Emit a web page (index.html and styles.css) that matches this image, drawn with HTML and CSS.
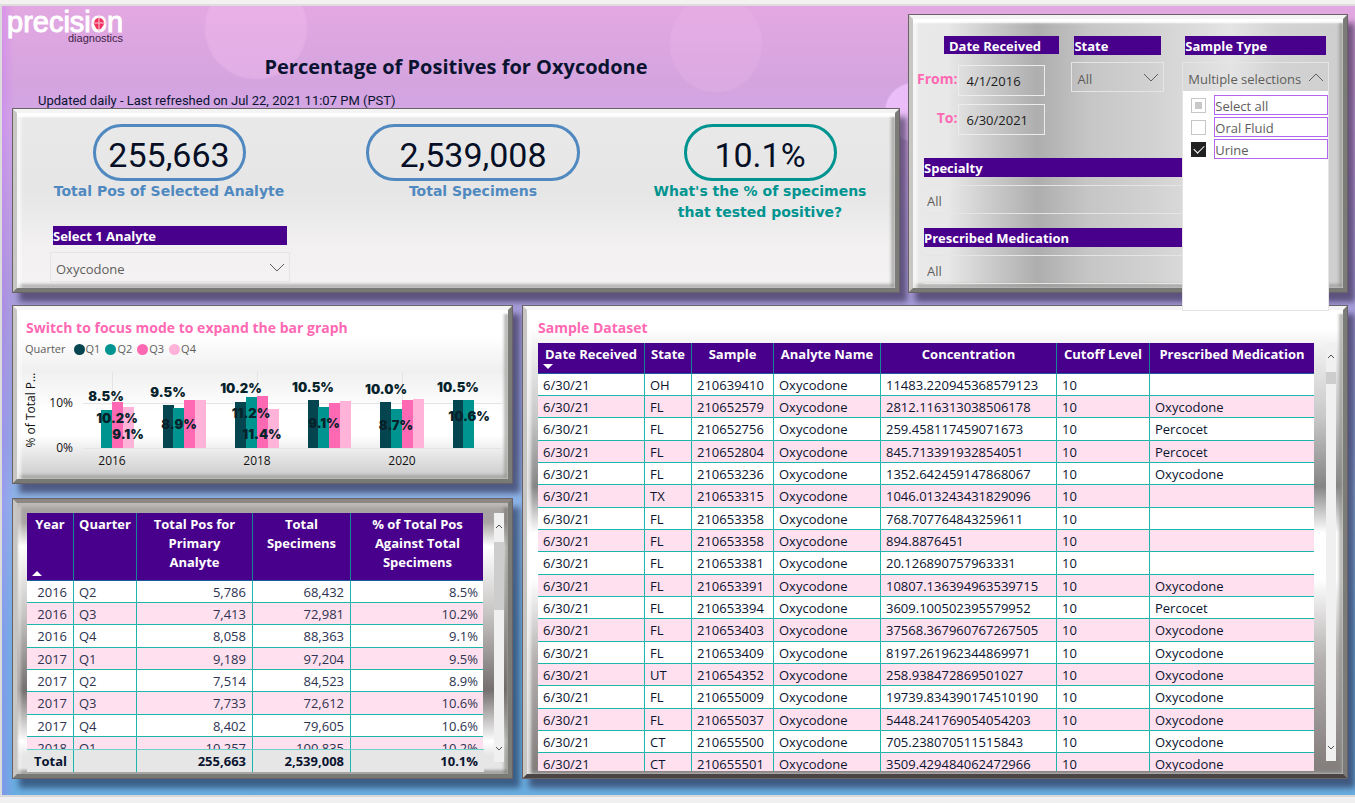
FILE: index.html
```html
<!DOCTYPE html>
<html lang="en">
<head>
<meta charset="utf-8">
<title>Percentage of Positives for Oxycodone</title>
<link rel="stylesheet" href="styles.css">
</head>
<body>
<main class="report">
  <div class="row row-top">
    <div class="intro">
      <header class="masthead">
        <svg class="logo" viewBox="0 0 124 40" role="img" aria-label="precision diagnostics">
          <circle cx="95" cy="17" r="7" fill="#f0305f"/>
          <text class="logo-name" x="3" y="26">precision</text>
          <circle cx="95" cy="17" r="5" fill="#f0305f"/>
          <path d="M95 9v17M87 17h16" stroke="#fbc8d8" stroke-width="1"/>
          <text class="logo-sub" x="64" y="36">diagnostics</text>
        </svg>
        <h1 class="title">Percentage of Positives for Oxycodone</h1>
        <p class="updated">Updated daily - Last refreshed on Jul 22, 2021 11:07 PM (PST)</p>
      </header>
      <section class="panel panel-kpi">
        <div class="kpis">
          <div class="kpi"><div class="pill">255,663</div><p class="kpi-label">Total Pos of Selected Analyte</p></div>
          <div class="kpi"><div class="pill pill-wide">2,539,008</div><p class="kpi-label">Total Specimens</p></div>
          <div class="kpi kpi-teal"><div class="pill">10.1%</div><p class="kpi-label">What's the % of specimens<br>that tested positive?</p></div>
        </div>
        <div class="slicer slicer-analyte">
          <label class="bar" for="analyte">Select 1 Analyte</label>
          <div class="drop">
            <select id="analyte"><option>Oxycodone</option></select>
            <svg class="chevron" viewBox="0 0 16 9"><path d="M1 1l7 7 7-7"/></svg>
          </div>
        </div>
      </section>
    </div>

    <section class="panel panel-filters">
      <div class="filters-top">
        <div class="dates">
          <div class="bar bar-date">Date Received</div>
          <div class="date-row"><label for="from">From:</label><input id="from" type="text" value="4/1/2016"></div>
          <div class="date-row"><label for="to">To:</label><input id="to" type="text" value="6/30/2021"></div>
        </div>
        <div class="slicer">
          <label class="bar" for="state">State</label>
          <div class="drop">
            <select id="state"><option>All</option></select>
            <svg class="chevron" viewBox="0 0 16 9"><path d="M1 1l7 7 7-7"/></svg>
          </div>
        </div>
        <div class="slicer slicer-sample">
          <div class="bar">Sample Type</div>
          <div class="drop">
            <button class="drop-button" type="button" aria-expanded="true">Multiple selections</button>
            <svg class="chevron" viewBox="0 0 16 9"><path d="M1 8l7-7 7 7"/></svg>
            <div class="menu">
              <div class="option"><input class="partial" type="checkbox" id="opt-all"><label for="opt-all">Select all</label></div>
              <div class="option"><input type="checkbox" id="opt-oral"><label for="opt-oral">Oral Fluid</label></div>
              <div class="option"><input type="checkbox" id="opt-urine" checked><label for="opt-urine">Urine</label></div>
            </div>
          </div>
        </div>
      </div>
      <div class="slicer slicer-wide">
        <label class="bar" for="specialty">Specialty</label>
        <div class="drop"><select id="specialty"><option>All</option></select></div>
      </div>
      <div class="slicer slicer-wide">
        <label class="bar" for="medication">Prescribed Medication</label>
        <div class="drop"><select id="medication"><option>All</option></select></div>
      </div>
    </section>
  </div>

  <div class="row row-bottom">
    <div class="stack">
      <section class="panel panel-chart">
        <h2 class="heading">Switch to focus mode to expand the bar graph</h2>
        <ul class="legend">
          <li class="legend-title">Quarter</li>
          <li class="q1">Q1</li><li class="q2">Q2</li><li class="q3">Q3</li><li class="q4">Q4</li>
        </ul>
        <svg class="chart" viewBox="21 360 483 115" role="img" aria-label="Percent of total positives by quarter">
          <path class="grid" d="M83 403.5H503M83 448.5H503M112.500 372V448M257.500 372V448M402.500 372V448"/>
          <g class="fill-q1">
            <rect x="163" y="405" width="11" height="43"/><rect x="235" y="402" width="11" height="46"/><rect x="308" y="400" width="11" height="48"/><rect x="380" y="402" width="11" height="46"/><rect x="453" y="400" width="11" height="48"/>
          </g>
          <g class="fill-q2">
            <rect x="101" y="410" width="11" height="38"/><rect x="173" y="408" width="11" height="40"/><rect x="246" y="397" width="11" height="51"/><rect x="318" y="407" width="11" height="41"/><rect x="391" y="409" width="11" height="39"/><rect x="463" y="400" width="11" height="48"/>
          </g>
          <g class="fill-q3">
            <rect x="112" y="402" width="11" height="46"/><rect x="184" y="400" width="11" height="48"/><rect x="257" y="396" width="11" height="52"/><rect x="329" y="403" width="11" height="45"/><rect x="402" y="400" width="11" height="48"/>
          </g>
          <g class="fill-q4">
            <rect x="123" y="407" width="11" height="41"/><rect x="195" y="400" width="11" height="48"/><rect x="268" y="409" width="11" height="39"/><rect x="340" y="401" width="11" height="47"/><rect x="413" y="399" width="11" height="49"/>
          </g>
          <g class="values">
            <text x="106" y="401">8.5%</text><text x="117" y="423">10.2%</text><text x="128" y="439">9.1%</text>
            <text x="168" y="397">9.5%</text><text x="179" y="429">8.9%</text>
            <text x="241" y="393">10.2%</text><text x="251" y="418">11.2%</text><text x="262" y="439">11.4%</text>
            <text x="313" y="392">10.5%</text><text x="324" y="428">9.1%</text>
            <text x="386" y="394">10.0%</text><text x="396" y="430">8.7%</text>
            <text x="458" y="392">10.5%</text><text x="469" y="421">10.6%</text>
          </g>
          <g class="axis">
            <text x="112" y="465">2016</text><text x="257" y="465">2018</text><text x="402" y="465">2020</text>
            <text class="end" x="73" y="407">10%</text><text class="end" x="73" y="452">0%</text>
            <text transform="translate(35 410) rotate(-90)">% of Total P...</text>
          </g>
        </svg>
      </section>

      <section class="panel panel-quarters">
        <div class="table-area">
          <div class="clip">
            <table class="data quarters">
              <colgroup><col class="w-year"><col class="w-quarter"><col class="w-pos"><col class="w-spec"><col class="w-pct"></colgroup>
              <thead><tr><th>Year<svg class="sort" viewBox="0 0 10 5"><path d="M0 5l5-5 5 5z"/></svg></th><th>Quarter</th><th>Total Pos for<br>Primary<br>Analyte</th><th>Total<br>Specimens</th><th>% of Total Pos<br>Against Total<br>Specimens</th></tr></thead>
              <tbody>
                <tr><td>2016</td><td>Q2</td><td>5,786</td><td>68,432</td><td>8.5%</td></tr>
                <tr><td>2016</td><td>Q3</td><td>7,413</td><td>72,981</td><td>10.2%</td></tr>
                <tr><td>2016</td><td>Q4</td><td>8,058</td><td>88,363</td><td>9.1%</td></tr>
                <tr><td>2017</td><td>Q1</td><td>9,189</td><td>97,204</td><td>9.5%</td></tr>
                <tr><td>2017</td><td>Q2</td><td>7,514</td><td>84,523</td><td>8.9%</td></tr>
                <tr><td>2017</td><td>Q3</td><td>7,733</td><td>72,612</td><td>10.6%</td></tr>
                <tr><td>2017</td><td>Q4</td><td>8,402</td><td>79,605</td><td>10.6%</td></tr>
                <tr><td>2018</td><td>Q1</td><td>10,257</td><td>100,835</td><td>10.2%</td></tr>
              </tbody>
            </table>
          </div>
          <table class="data quarters total">
            <colgroup><col class="w-year"><col class="w-quarter"><col class="w-pos"><col class="w-spec"><col class="w-pct"></colgroup>
            <tbody><tr><td>Total</td><td></td><td>255,663</td><td>2,539,008</td><td>10.1%</td></tr></tbody>
          </table>
        </div>
        <div class="scroll">
          <svg viewBox="0 0 8 5"><path d="M1 4l3-3 3 3"/></svg>
          <div class="thumb"></div>
          <svg class="down" viewBox="0 0 8 5"><path d="M1 1l3 3 3-3"/></svg>
        </div>
      </section>
    </div>

    <section class="panel panel-dataset">
      <h2 class="heading">Sample Dataset</h2>
      <div class="dataset-body">
        <div class="clip">
          <table class="data dataset">
            <colgroup><col class="w-date"><col class="w-state"><col class="w-sample"><col class="w-analyte"><col class="w-conc"><col class="w-cutoff"><col class="w-med"></colgroup>
            <thead><tr><th>Date Received<svg class="sort" viewBox="0 0 10 5"><path d="M0 0h10l-5 5z"/></svg></th><th>State</th><th>Sample</th><th>Analyte Name</th><th>Concentration</th><th>Cutoff Level</th><th>Prescribed Medication</th></tr></thead>
            <tbody>
              <tr><td>6/30/21</td><td>OH</td><td>210639410</td><td>Oxycodone</td><td>11483.220945368579123</td><td>10</td><td></td></tr>
              <tr><td>6/30/21</td><td>FL</td><td>210652579</td><td>Oxycodone</td><td>2812.116313038506178</td><td>10</td><td>Oxycodone</td></tr>
              <tr><td>6/30/21</td><td>FL</td><td>210652756</td><td>Oxycodone</td><td>259.458117459071673</td><td>10</td><td>Percocet</td></tr>
              <tr><td>6/30/21</td><td>FL</td><td>210652804</td><td>Oxycodone</td><td>845.713391932854051</td><td>10</td><td>Percocet</td></tr>
              <tr><td>6/30/21</td><td>FL</td><td>210653236</td><td>Oxycodone</td><td>1352.642459147868067</td><td>10</td><td>Oxycodone</td></tr>
              <tr><td>6/30/21</td><td>TX</td><td>210653315</td><td>Oxycodone</td><td>1046.013243431829096</td><td>10</td><td></td></tr>
              <tr><td>6/30/21</td><td>FL</td><td>210653358</td><td>Oxycodone</td><td>768.707764843259611</td><td>10</td><td></td></tr>
              <tr><td>6/30/21</td><td>FL</td><td>210653358</td><td>Oxycodone</td><td>894.8876451</td><td>10</td><td></td></tr>
              <tr><td>6/30/21</td><td>FL</td><td>210653381</td><td>Oxycodone</td><td>20.126890757963331</td><td>10</td><td></td></tr>
              <tr><td>6/30/21</td><td>FL</td><td>210653391</td><td>Oxycodone</td><td>10807.136394963539715</td><td>10</td><td>Oxycodone</td></tr>
              <tr><td>6/30/21</td><td>FL</td><td>210653394</td><td>Oxycodone</td><td>3609.100502395579952</td><td>10</td><td>Percocet</td></tr>
              <tr><td>6/30/21</td><td>FL</td><td>210653403</td><td>Oxycodone</td><td>37568.367960767267505</td><td>10</td><td>Oxycodone</td></tr>
              <tr><td>6/30/21</td><td>FL</td><td>210653409</td><td>Oxycodone</td><td>8197.261962344869971</td><td>10</td><td>Oxycodone</td></tr>
              <tr><td>6/30/21</td><td>UT</td><td>210654352</td><td>Oxycodone</td><td>258.938472869501027</td><td>10</td><td>Oxycodone</td></tr>
              <tr><td>6/30/21</td><td>FL</td><td>210655009</td><td>Oxycodone</td><td>19739.834390174510190</td><td>10</td><td>Oxycodone</td></tr>
              <tr><td>6/30/21</td><td>FL</td><td>210655037</td><td>Oxycodone</td><td>5448.241769054054203</td><td>10</td><td>Oxycodone</td></tr>
              <tr><td>6/30/21</td><td>CT</td><td>210655500</td><td>Oxycodone</td><td>705.238070511515843</td><td>10</td><td>Oxycodone</td></tr>
              <tr><td>6/30/21</td><td>CT</td><td>210655501</td><td>Oxycodone</td><td>3509.429484062472966</td><td>10</td><td>Oxycodone</td></tr>
            </tbody>
          </table>
        </div>
        <div class="scroll">
          <svg viewBox="0 0 8 5"><path d="M1 4l3-3 3 3"/></svg>
          <div class="thumb"></div>
          <svg class="down" viewBox="0 0 8 5"><path d="M1 1l3 3 3-3"/></svg>
        </div>
      </div>
    </section>
  </div>
</main>
</body>
</html>
```

FILE: styles.css
```css
* { box-sizing: border-box; }

body {
  margin: 0;
  height: 100vh;
  display: flex;
  flex-direction: column;
  overflow: hidden;
  background: #f3f2f1;
  border-top: 4px solid #f3f2f1;
  border-bottom: 6px solid #f0f0f0;
  font-family: "Segoe UI", "Open Sans", "Noto Sans", sans-serif;
  font-size: 13px;
  color: #0a1430;
}

h1, h2, p, ul { margin: 0; padding: 0; }

.report {
  flex: 1;
  min-height: 0;
  display: flex;
  flex-direction: column;
  gap: 12px;
  padding: 0 7px 16px 10px;
  border-top: 2px solid #dedcdc;
  border-bottom: 2px solid #d9d9d9;
  border-left: 2px solid #dcdcdc;
  background:
    linear-gradient(to right, rgba(190, 90, 255, .25), transparent 12px),
    radial-gradient(circle at 254px 22px, rgba(244, 192, 240, .35) 50px, transparent 52px),
    radial-gradient(ellipse at 714px 38px, rgba(240, 186, 236, .25) 45px, transparent 47px),
    radial-gradient(circle at 912px 106px, rgba(240, 195, 255, .8) 28px, transparent 30px),
    linear-gradient(#e3a8e2 0, #d4a4df 80px, #d2a6e6 110px, #a99fdc 292px, #8fa8e2 440px, #8cb4e8 495px, #6fb1e3 640px, #6aaee2 100%);
}

.row { display: grid; }
.row-top { grid-template-columns: minmax(0, 888fr) minmax(0, 440fr); gap: 8px; }
.row-bottom {
  flex: 1;
  min-height: 0;
  grid-template-columns: minmax(0, 501fr) minmax(0, 826fr);
  grid-template-rows: minmax(0, 1fr);
  gap: 9px;
}
.intro { display: flex; flex-direction: column; }
.stack { display: flex; flex-direction: column; gap: 14px; min-height: 0; }

/* Bevelled panels */
.panel {
  border: 5px solid;
  border-color: #f4f4f4 #7b7b78 #787875 #c8c6c2;
  outline: 1px solid #6a6266;
  outline-offset: -1px;
  padding: 4px;
  box-shadow:
    inset 0 4px 2px #fff,
    inset 4px 0 3px rgba(255, 255, 255, .7),
    inset -4px 0 3px rgba(140, 140, 138, .6),
    inset 0 -4px 3px rgba(140, 140, 138, .6),
    7px 9px 6px rgba(30, 20, 50, .55);
}
.panel-kpi { flex: 1; background: linear-gradient(#e9e9e9, #e6e6e6 45%, #f2f0f1 75%, #f4f2f3); }
.panel-filters {
  margin-top: 8px;
  background: linear-gradient(to right, #e9e9e9 0, #e8e8e8 8%, #cbcbcb 18%, #aeaeae 29%, #c6c6c6 41%, #d2d2d2 56%, #e4e4e4 74%, #d3d3d3 85%, #cecece 100%);
}
.panel-chart { padding-top: 8px; background: linear-gradient(#fff 0, #fff 15%, #f0f0f0 36%, #fff 60%, #fff 74%, #cfcfcf 97%); }
.panel-quarters {
  flex: 1;
  min-height: 0;
  display: flex;
  padding: 10px 4px 2px 10px;
  border-top-color: #8d8783;
  background: linear-gradient(#a8a4a3 0, #a8a4a3 7%, #fff 16%, #c9c7c6 40%, #756f6f 69%, #fff 88%, #e6e6e6 93%);
  box-shadow: inset 0 4px 3px #bdb9b7, inset 4px 0 3px rgba(255, 255, 255, .4), inset -4px 0 3px rgba(100, 100, 98, .5), inset 0 -4px 3px rgba(120, 120, 118, .6), 7px 9px 6px rgba(20, 30, 60, .55);
}
.panel-dataset {
  display: flex;
  flex-direction: column;
  padding: 8px 7px 3px 11px;
  border-bottom-color: #4a4544;
  background: linear-gradient(#fff 0, #fff 4%, #f0f0f0 8%, #c8c8c8 23%, #858585 38%, #fff 48%, #fff 58%, #b5b2b1 75%, #857f7e 98%);
}

/* Masthead */
.masthead { height: 102px; }
.logo { display: block; width: 124px; height: 40px; margin-left: -8px; }
.logo-name { font: 29px "Liberation Sans", Arial, sans-serif; fill: #fff; stroke: #fff; stroke-width: 1px; }
.logo-sub { font: 11px "Liberation Sans", Arial, sans-serif; fill: #3f1f48; }
.title { font-size: 20px; line-height: 28px; margin-top: 7px; text-align: center; }
.updated { font: 13px/16px Roboto, sans-serif; margin: 12px 0 0 26px; }

/* Cards */
.kpis { display: grid; grid-template-columns: 296fr 312fr 262fr; padding-top: 7px; }
.kpi { color: #5089c0; text-align: center; }
.kpi-teal { color: #009490; }
.pill {
  display: inline-block;
  width: 153px;
  height: 57px;
  padding-top: 3px;
  border: 3px solid currentColor;
  border-radius: 29px;
  font: 34px/51px Roboto, sans-serif;
}
.pill::first-line { color: #060f26; }
.pill-wide { width: 214px; }
.kpi-label { font: 700 14px/21px "Arial Black", "DejaVu Sans", sans-serif; }

/* Slicers */
.bar {
  display: block;
  height: 19px;
  background: #48008c;
  color: #fff;
  font-weight: 700;
  line-height: 20px;
}
.drop { position: relative; height: 30px; border: 1px solid #e6e4e5; }
.drop select, .drop-button {
  appearance: none;
  display: block;
  width: 100%;
  height: 100%;
  padding: 4px 0 0 5px;
  border: 0;
  background: none;
  font: inherit;
  color: #605e5c;
  text-align: left;
  white-space: nowrap;
}
.chevron { position: absolute; right: 4px; top: 10px; width: 16px; height: 9px; pointer-events: none; }
.chevron path { fill: none; stroke: #605e5c; }
.slicer .drop { margin-top: 7px; }
.slicer-analyte { width: 240px; margin: 3px 0 0 29px; }
.slicer-analyte .bar { margin: 0 3px; }
.slicer-analyte .drop { margin-top: 7px; }

.filters-top { display: grid; grid-template-columns: 143fr 93fr 154fr; gap: 11px; padding: 13px 10px 0 0; }
.filters-top .bar { margin: 0 3px; }
.filters-top .bar-date { height: 18px; margin: 0 1px 11px 27px; padding-left: 5px; line-height: 20px; }
.slicer-sample { padding-left: 7px; }
.date-row { display: flex; justify-content: flex-end; gap: 1px; margin-bottom: 8px; padding-right: 15px; }
.date-row label { color: #ff69b4; font-weight: 700; font-size: 14px; line-height: 28px; }
.date-row input {
  width: 87px;
  height: 31px;
  padding: 0 7px;
  border: 1px solid #ececec;
  background: none;
  font: inherit;
  color: #1c1c1c;
}
.slicer-wide { margin: 23px 10px 0 7px; }
.filters-top + .slicer-wide { margin-top: 15px; }
.slicer-wide + .slicer-wide { margin-top: 14px; }
.slicer-wide .drop { margin-top: 8px; height: 29px; border-width: 1px 0; }
.slicer-wide select { padding: 3px 0 0 3px; }

.menu {
  position: absolute;
  z-index: 2;
  top: 100%;
  left: -1px;
  right: -1px;
  height: 220px;
  padding-top: 3px;
  background: #fff;
  border: 1px solid #e6e4e5;
  border-top: 0;
}
.option { display: flex; align-items: center; gap: 8px; height: 22px; padding-left: 8px; }
.option label {
  flex: 1;
  height: 20px;
  border: 1px solid #b266f0;
  line-height: 20px;
  color: #605e5c;
}
.option input { appearance: none; width: 15px; height: 15px; margin: 0; border: 1px solid #c8c6c4; background: #fff; }
.option .partial { background: #c8c8c8; box-shadow: inset 0 0 0 3px #fff; }
.option input:checked { border-color: #212121; background: #212121; display: grid; place-items: center; }
.option input:checked::after {
  content: "";
  width: 9px;
  height: 5px;
  margin-bottom: 3px;
  border: solid #fff;
  border-width: 0 0 1px 1px;
  transform: rotate(-45deg);
}

/* Chart */
.heading { color: #ff69b4; font-size: 14px; line-height: 20px; }
.panel-chart .heading { padding-left: 5px; }
.legend { display: flex; gap: 5px; padding-left: 4px; list-style: none; font-size: 11px; line-height: 22px; color: #605e5c; }
.legend li { display: flex; align-items: center; gap: 1px; }
.legend-title { margin-right: 3px; }
.legend li::before { width: 11px; height: 11px; border-radius: 50%; }
.legend .q1::before { content: ""; background: #05454f; }
.legend .q2::before { content: ""; background: #009490; }
.legend .q3::before { content: ""; background: #ff69b4; }
.legend .q4::before { content: ""; background: #ffb3d9; }
.fill-q1 { fill: #05454f; }
.fill-q2 { fill: #009490; }
.fill-q3 { fill: #ff69b4; }
.fill-q4 { fill: #ffb3d9; }
.chart { display: block; width: 100%; }
.grid { stroke: #e4e4e4; fill: none; }
.values { font: 900 13px Inter, sans-serif; fill: #06222b; text-anchor: middle; }
.axis { font-size: 12px; fill: #111; text-anchor: middle; }
.axis .end { text-anchor: end; }

/* Tables */
.table-area { flex: 1; min-width: 0; display: flex; flex-direction: column; }
.clip { flex: 1; min-height: 0; min-width: 0; overflow: hidden; }
.data { width: 100%; table-layout: fixed; border-collapse: separate; border-spacing: 0; background: #fff; }
.data th {
  position: relative;
  padding: 2px 0 0;
  vertical-align: top;
  background: #48008c;
  color: #fff;
  line-height: 19px;
  white-space: nowrap;
}
.data th, .data td { border-right: 1px solid #1eb5ac; border-bottom: 1px solid #1eb5ac; }
.data th { border-right-color: #16829c; border-bottom-color: #1c5c9c; }
.data th:last-child, .data td:last-child { border-right: 0; }
.data td { height: 22px; padding: 0 6px; line-height: 18px; white-space: nowrap; }
.data tr:nth-child(3n) td { height: 23px; }
.data tbody tr:nth-child(even) { background: #ffe0ee; }
.data .sort { position: absolute; width: 10px; height: 5px; left: 5px; bottom: 4px; fill: #fff; }
.quarters thead tr { height: 68px; }
.quarters td { text-align: right; color: #2d3350; }
.quarters td:nth-child(2) { text-align: left; padding-left: 5px; }
.dataset thead tr { height: 31px; }
.dataset td { padding-left: 5px; }
.data.total { background: #e6e6e6; border-top: 1px solid #6fd0cb; }
.total td { border-bottom: 0; font-weight: 700; color: #0a1430; }

.w-year { width: 47px; }
.w-quarter { width: 63px; }
.w-pos { width: 116px; }
.w-spec { width: 98px; }
.w-pct { width: 133px; }
.w-date { width: 107px; }
.w-state { width: 47px; }
.w-sample { width: 82px; }
.w-analyte { width: 107px; }
.w-conc { width: 176px; }
.w-cutoff { width: 93px; }
.w-med { width: 164px; }

.dataset-body { flex: 1; min-height: 0; display: flex; margin-top: 5px; }
.panel-dataset .heading { flex: none; }

.scroll { display: flex; flex-direction: column; align-items: center; width: 10px; margin: 0 0 10px 12px; background: #f0f0f0; }
.panel-quarters .scroll { margin-left: 11px; }
.scroll svg { flex: none; width: 8px; height: 5px; margin-top: 11px; }
.scroll path { fill: none; stroke: #505050; }
.scroll .down { margin: auto 0 11px; }
.thumb { width: 100%; height: 12px; margin-top: 13px; background: #cdcdcd; }
.panel-quarters .thumb { height: 68px; }
```
